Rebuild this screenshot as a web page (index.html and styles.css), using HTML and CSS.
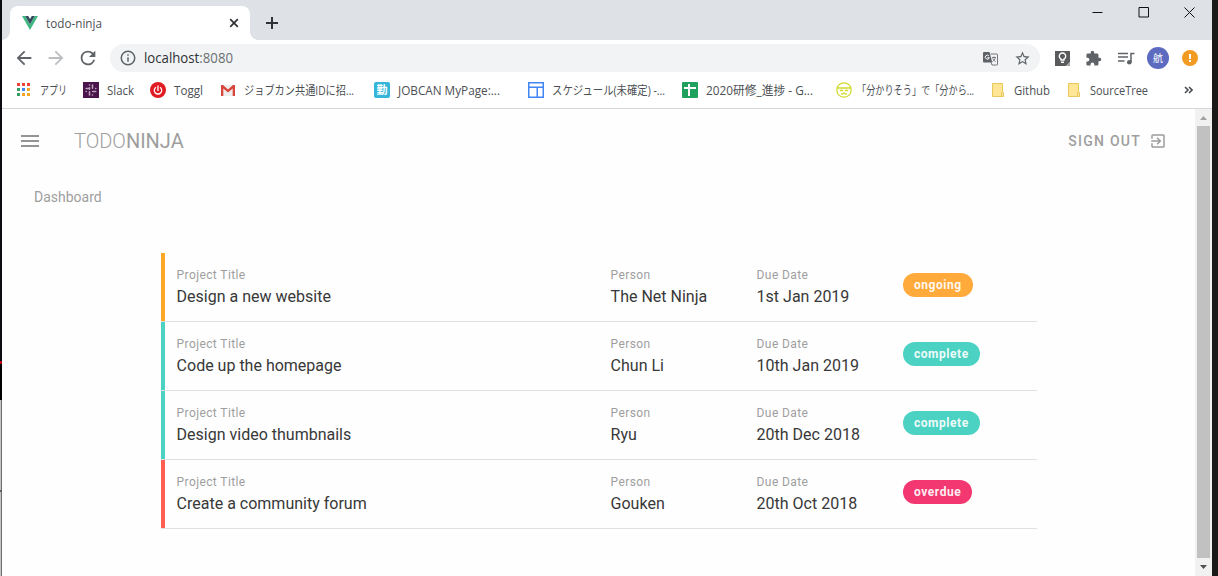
FILE: index.html
```html
<!DOCTYPE html>
<html lang="ja">
<head>
<meta charset="utf-8">
<title>todo-ninja</title>
<link rel="stylesheet" href="styles.css">
</head>
<body>
<div class="screen">
<div class="edge-left"><i class="edge-dark"></i><i class="edge-red"></i><i class="edge-dark2"></i><i class="edge-grey"></i><i class="edge-mark"></i><i class="edge-grey rest"></i></div>
<div class="window">
  <div class="titlebar">
    <div class="tab">
      <svg class="vue" width="16" height="14" viewBox="0 0 16 14"><path fill="#41b883" d="M0 0h3.2L8 8.3 12.8 0H16L8 14z"/><path fill="#35495e" d="M3.2 0h3L8 3l1.800-3h3L8 8.300z"/></svg>
      <span class="tab-title"><svg width="58" height="18"><text x="0" y="14" textLength="56" lengthAdjust="spacingAndGlyphs">todo-ninja</text></svg></span>
      <svg class="tab-close" width="10" height="10" viewBox="0 0 10 10"><path d="M1.200 1.200l7.600 7.600M8.800 1.200L1.200 8.800"/></svg>
    </div>
    <svg class="newtab" width="12" height="12" viewBox="0 0 12 12"><path d="M6 0v12M0 6h12"/></svg>
    <div class="winctl">
      <svg width="11" height="11" viewBox="0 0 11 11"><path d="M.5 5.500h10"/></svg>
      <svg width="11" height="11" viewBox="0 0 11 11"><path d="M1 .5h9.500v9.500H1z"/></svg>
      <svg width="11" height="11" viewBox="0 0 11 11"><path d="M.5.5l10 10M10.500.5l-10 10"/></svg>
    </div>
  </div>
  <div class="toolbar">
    <div class="nav">
      <svg width="22" height="22" viewBox="0 0 24 24" fill="#5f6368"><path d="M20 11H7.830l5.590-5.590L12 4l-8 8 8 8 1.410-1.410L7.830 13H20z"/></svg>
      <svg width="22" height="22" viewBox="0 0 24 24" fill="#bbbdbf"><path d="M12 4l-1.410 1.410L16.170 11H4v2h12.170l-5.580 5.590L12 20l8-8z"/></svg>
      <svg width="22" height="22" viewBox="0 0 24 24" fill="#5f6368"><path d="M17.650 6.350A7.960 7.960 0 0 0 12 4a8 8 0 1 0 7.730 10h-2.080A6 6 0 1 1 12 6c1.660 0 3.140.69 4.220 1.780L13 11h7V4z"/></svg>
    </div>
    <div class="omnibox">
      <svg width="18" height="18" viewBox="0 0 24 24" fill="#5f6368"><path d="M11 17h2v-6h-2zm0-8h2V7h-2zm1-7a10 10 0 1 0 0 20 10 10 0 0 0 0-20zm0 18a8 8 0 1 1 0-16 8 8 0 0 1 0 16z"/></svg>
      <svg class="url" width="92" height="20"><text x="0" y="15" textLength="89" lengthAdjust="spacingAndGlyphs"><tspan fill="#303134">localhost</tspan><tspan fill="#6c7075">:8080</tspan></text></svg>
      <svg class="translate" width="15" height="15" viewBox="0 0 15 15"><path fill="#5f6368" d="M1 1h5.500l2.800 10.500H1a1 1 0 0 1-1-1V2a1 1 0 0 1 1-1z"/><path fill="none" stroke="#74777b" d="M7.500 3H14a.5.5 0 0 1 .5.5v10a.5.5 0 0 1-.5.500H9l-1-2.500M9 6.500h4M11 5.500v1M12.300 6.500c-.5 2-1.600 3-2.800 4M9.800 7.500c.7 1.500 1.700 2.500 2.800 3"/><path fill="none" stroke="#fff" d="M5.900 4.900a2 2 0 1 0 .4 1.800H4.400"/></svg>
      <svg class="star" width="17" height="17" viewBox="0 0 24 24" fill="#5f6368"><path d="M22 9.240l-7.190-.62L12 2 9.190 8.630 2 9.240l5.460 4.730L5.820 21 12 17.270 18.180 21l-1.630-7.030zM12 15.400l-3.760 2.270 1-4.280-3.320-2.880 4.380-.38L12 6.100l1.710 4.040 4.380.38-3.320 2.880 1 4.280z"/></svg>
    </div>
    <div class="exts">
      <svg width="15" height="15" viewBox="0 0 15 15"><path fill="#5a5b5d" d="M0 0h15v11l-4 4H0z"/><path fill="#a4a5a6" d="M15 11v4h-4z"/><path fill="none" stroke="#fff" stroke-width="1.400" d="M6 9V8a3.200 3.200 0 1 1 3 0v1zM6 11.300h3"/></svg>
      <svg class="puzzle" width="17" height="17" viewBox="0 0 24 24" fill="#5f6368"><path d="M20.500 11H19V7a2 2 0 0 0-2-2h-4V3.500a2.500 2.500 0 0 0-5 0V5H4a2 2 0 0 0-2 2v3.800h1.500a2.700 2.700 0 0 1 0 5.400H2V20c0 1.100.9 2 2 2h3.800v-1.500a2.700 2.700 0 0 1 5.400 0V22H17a2 2 0 0 0 2-2v-4h1.500a2.500 2.500 0 0 0 0-5z"/></svg>
      <svg class="queue" width="17" height="13" viewBox="0 0 17 13"><path fill="none" stroke="#5f6368" stroke-width="1.500" d="M0 1.500h10M0 5h10M0 9h6.500M13 10.500V1.500h3.500"/><circle cx="11.300" cy="10.300" r="2.300" fill="#5f6368"/></svg>
      <span class="avatar">航</span>
      <svg class="warn" width="16" height="16" viewBox="0 0 16 16"><circle cx="8" cy="8" r="8" fill="#f29b22"/><path fill="#fff" d="M7 4h2v5H7zM7 10h2v2H7z"/></svg>
    </div>
  </div>
  <div class="bookmarks">
    <div class="bm"><svg width="16" height="16" viewBox="0 0 16 16"><path fill="#ea4335" d="M0 1h3v3H0zM5 1h3v3H5zM10 1h3v3h-3z"/><path fill="#34a060" d="M0 6h3v3H0zM0 11h3v3H0z"/><path fill="#4285f4" d="M5 6h3v3H5z"/><path fill="#f5a623" d="M10 6h3v3h-3zM5 11h3v3H5zM10 11h3v3h-3z"/></svg><svg class="lbl" width="34" height="20"><text x="0" y="15" textLength="27" lengthAdjust="spacingAndGlyphs">アプリ</text></svg></div>
    <div class="bm"><svg width="16" height="16" viewBox="0 0 16 16"><path fill="#4a154b" d="M0 0h16v16H0z"/><path fill="none" stroke="#b9a2ba" stroke-width="1.600" stroke-linecap="round" d="M6.500 5.800v1.500M6.500 3h.1M3.200 6.500h3M9.500 3v3.300M12.700 6.500h.1M9.700 9.500h3M9.500 13h-.1M6.500 9.700V13M3.200 9.500h.1"/></svg><svg class="lbl" width="32" height="20"><text x="0" y="15" textLength="27" lengthAdjust="spacingAndGlyphs">Slack</text></svg></div>
    <div class="bm"><svg width="16" height="16" viewBox="0 0 16 16"><circle cx="8" cy="8" r="8" fill="#e01b22"/><path fill="none" stroke="#fff" stroke-width="1.300" d="M8 3.500V9M6 5.200a3.700 3.700 0 1 0 4 0"/></svg><svg class="lbl" width="34" height="20"><text x="0" y="15" textLength="29" lengthAdjust="spacingAndGlyphs">Toggl</text></svg></div>
    <div class="bm"><svg width="16" height="16" viewBox="0 0 16 16"><path fill="#eee" d="M1 3h14v11H1z"/><path fill="#d9453a" d="M1 3h2l5 4.500L13 3h2v11h-2.300V6.500L8 10.500l-4.700-4V14H1z"/></svg><svg class="lbl" width="120" height="20"><text x="0" y="15" textLength="110" lengthAdjust="spacingAndGlyphs">ジョブカン共通IDに招...</text></svg></div>
    <div class="bm"><span class="kin">勤</span><svg class="lbl" width="110" height="20"><text x="0" y="15" textLength="102" lengthAdjust="spacingAndGlyphs">JOBCAN MyPage:...</text></svg></div>
    <div class="bm"><svg width="16" height="16" viewBox="0 0 16 16"><path fill="none" stroke="#4285f4" stroke-width="1.500" d="M.75.75h14.500v14.500H.75zM1 5.250h14M9.250 5v10"/></svg><svg class="lbl" width="122" height="20"><text x="0" y="15" textLength="113" lengthAdjust="spacingAndGlyphs">スケジュール(未確定) -...</text></svg></div>
    <div class="bm"><svg width="16" height="16" viewBox="0 0 16 16"><rect width="16" height="16" rx="1" fill="#1fa15d"/><path stroke="#fff" stroke-width="2" d="M2 6h12M7 2v12"/></svg><svg class="lbl" width="118" height="20"><text x="0" y="15" textLength="107" lengthAdjust="spacingAndGlyphs">2020研修_進捗 - G...</text></svg></div>
    <div class="bm"><svg width="16" height="16" viewBox="0 0 16 16" fill="none" stroke="#d3d92e" stroke-width="1.300"><circle cx="8" cy="8" r="7.200"/><path d="M1.500 6h13M4 9q1.500-1.500 3 0M9 9q1.500-1.500 3 0M5 11.500q1.500 1.300 3-.5 1.500 1.800 3 .5"/></svg><svg class="lbl" width="124" height="20"><text x="-3" y="15" textLength="117" lengthAdjust="spacingAndGlyphs">「分かりそう」で「分から...</text></svg></div>
    <div class="bm folder"><svg width="12" height="14" viewBox="0 0 12 14"><path fill="#ffe596" stroke="#e8c75b" d="M.5.5h10v9h1v4H.5zM9.500 9.500v4"/></svg><svg class="lbl" width="42" height="20"><text x="0" y="15" textLength="36" lengthAdjust="spacingAndGlyphs">Github</text></svg></div>
    <div class="bm folder"><svg width="12" height="14" viewBox="0 0 12 14"><path fill="#ffe596" stroke="#e8c75b" d="M.5.5h10v9h1v4H.5zM9.500 9.500v4"/></svg><svg class="lbl" width="64" height="20"><text x="0" y="15" textLength="58" lengthAdjust="spacingAndGlyphs">SourceTree</text></svg></div>
    <svg class="more" width="9" height="8" viewBox="0 0 9 8"><path d="M1 1l3 3-3 3M5 1l3 3-3 3"/></svg>
  </div>
  <div class="viewport">
    <main class="app">
      <header class="appbar">
        <svg class="menu" width="18" height="12" viewBox="0 0 18 12"><path fill="#949494" d="M0 0h18v2H0zM0 5h18v2H0zM0 10h18v2H0z"/></svg>
        <h1 class="brand"><span class="light">TODO</span><span>NINJA</span></h1>
        <div class="signout"><span>SIGN OUT</span><svg width="18" height="18" viewBox="0 0 24 24" fill="#9c9c9c"><path d="M10.090 15.590L11.500 17l5-5-5-5-1.410 1.410L12.670 11H3v2h9.670zM19 3H5a2 2 0 0 0-2 2v4h2V5h14v14H5v-4H3v4c0 1.100.89 2 2 2h14a2 2 0 0 0 2-2V5a2 2 0 0 0-2-2z"/></svg></div>
      </header>
      <h2 class="page-title">Dashboard</h2>
      <section class="projects">
        <div class="row ongoing"><div><div class="cap">Project Title</div><div class="val">Design a new website</div></div><div><div class="cap">Person</div><div class="val">The Net Ninja</div></div><div><div class="cap">Due Date</div><div class="val">1st Jan 2019</div></div><div><span class="chip">ongoing</span></div></div>
        <div class="row complete"><div><div class="cap">Project Title</div><div class="val">Code up the homepage</div></div><div><div class="cap">Person</div><div class="val">Chun Li</div></div><div><div class="cap">Due Date</div><div class="val">10th Jan 2019</div></div><div><span class="chip">complete</span></div></div>
        <div class="row complete"><div><div class="cap">Project Title</div><div class="val">Design video thumbnails</div></div><div><div class="cap">Person</div><div class="val">Ryu</div></div><div><div class="cap">Due Date</div><div class="val">20th Dec 2018</div></div><div><span class="chip">complete</span></div></div>
        <div class="row overdue"><div><div class="cap">Project Title</div><div class="val">Create a community forum</div></div><div><div class="cap">Person</div><div class="val">Gouken</div></div><div><div class="cap">Due Date</div><div class="val">20th Oct 2018</div></div><div><span class="chip">overdue</span></div></div>
      </section>
    </main>
    <div class="scrollbar">
      <svg width="17" height="17" viewBox="0 0 17 17"><path fill="#a0a0a0" d="M5 11h7L8.500 7z"/></svg>
      <div class="thumb"></div>
      <svg width="17" height="18" viewBox="0 0 17 18"><path fill="#505050" d="M5 7h7l-3.500 4z"/></svg>
    </div>
  </div>
</div>
<div class="edge-right"></div>
</div>
</body>
</html>
```
FILE: styles.css
```css
* { box-sizing: border-box; }
body { margin: 0; overflow: hidden; }
svg { display: block; flex: none; }
.screen { display: flex; width: 1218px; height: 576px; font-family: Roboto, sans-serif; }

.edge-left { width: 2px; display: flex; flex-direction: column; }
.edge-dark { height: 361px; background: #0c0d10; }
.edge-red { height: 3px; background: #b8001c; }
.edge-dark2 { height: 36px; background: #000; }
.edge-grey { height: 90px; background: linear-gradient(90deg, #c4c4c4 50%, #6e6e6e 50%); }
.edge-mark { height: 2px; background: #606060; }
.edge-grey.rest { height: auto; flex: 1; }
.edge-right { width: 6px; background: #191a18; }

.window { width: 1210px; display: flex; flex-direction: column; background: #fff; }
.titlebar { height: 40px; background: #dee1e6; display: flex; padding-left: 8px; }
.tab { width: 240px; height: 34px; margin-top: 6px; background: #fff; border-radius: 8px 8px 0 0; display: flex; align-items: center; padding: 0 11px 0 12px; position: relative; }
.tab::before, .tab::after { content: ""; position: absolute; bottom: 0; width: 8px; height: 8px; }
.tab::before { left: -8px; background: radial-gradient(circle at 0 0, transparent 7.5px, #fff 8px); }
.tab::after { right: -8px; background: radial-gradient(circle at 100% 0, transparent 7.5px, #fff 8px); }
.tab-title { margin-left: 8px; flex: 1; }
.tab-title text, .lbl text { font: 12px "Open Sans", "Noto Sans CJK JP", sans-serif; fill: #4c4f53; }
.lbl { overflow: visible; }
.tab-close, .newtab { fill: none; stroke: #303235; stroke-width: 1.700; }
.newtab { margin: 17px 0 0 16px; stroke-width: 2; }
.winctl { display: flex; gap: 35px; margin: 7px 17px 0 auto; fill: none; stroke: #111; }

.toolbar { height: 36px; display: flex; align-items: center; padding-left: 11px; }
.nav { display: flex; gap: 10px; width: 97px; }
.omnibox { width: 930px; height: 28px; border-radius: 14px; background: #f1f3f4; display: flex; align-items: center; padding-left: 9px; }
.url { margin-left: 7px; font: 14px "Open Sans", sans-serif; }
.translate { margin-left: auto; }
.star { margin: 0 9px 0 16px; }
.exts { display: flex; align-items: center; margin-left: 15px; }
.puzzle { margin-left: 15px; }
.queue { margin-left: 16px; }
.avatar { width: 22px; height: 22px; margin-left: 12px; border-radius: 50%; background: #5c6bc0; color: #fff; font: 10px/21px "Noto Sans CJK JP", sans-serif; text-align: center; }
.warn { margin-left: 13px; }

.bookmarks { height: 33px; border-bottom: 1px solid #d5d7da; padding: 0 0 4px 15px; display: grid; grid-template-columns: 66px 67px 70px 154px 154px 154px 154px 155px 76px 117px auto; align-items: center; }
.bm { display: flex; align-items: center; gap: 8px; min-width: 0; }
.bm:first-child { gap: 7px; }
.bm.folder { gap: 10px; padding-left: 1px; }
.kin { width: 16px; height: 16px; border-radius: 2px; background: #35b6d8; color: #fff; font: bold 11px/15px "Noto Sans CJK JP", sans-serif; text-align: center; }
.more { fill: none; stroke: #4a4d51; stroke-width: 1.600; }

.viewport { flex: 1; display: flex; min-height: 0; }
.app { flex: 1; background: #fefefe; }
.appbar { height: 64px; display: flex; align-items: center; padding: 0 28px 0 19px; }
.brand { margin: 0 0 0 35px; font-size: 20px; font-weight: 400; color: #9e9e9e; line-height: 30px; }
.light { font-weight: 300; }
.signout { margin-left: auto; display: flex; align-items: center; gap: 8px; font-size: 14px; font-weight: 500; letter-spacing: 1.250px; color: #9e9e9e; }
.page-title { margin: 14px 0 0 32px; font-size: 14px; line-height: 20px; font-weight: 400; color: #9e9e9e; }
.projects { margin: 46px 0 0 159px; width: 876px; }
.row { height: 69px; display: grid; grid-template-columns: 434px 146px 146.4px auto; padding: 12px 0 0 15.6px; border-bottom: 1px solid #e0e0e0; position: relative; }
.row::before { content: ""; position: absolute; left: 0; top: 0; width: 4px; height: 68px; background: #ffa726; }
.cap { font-size: 12px; line-height: 20px; letter-spacing: 0.400px; color: #9e9e9e; }
.val { font-size: 16px; line-height: 24px; color: #383838; white-space: nowrap; }
.chip { display: inline-block; height: 24px; margin-top: 8px; padding: 0 11px; border-radius: 12px; font-size: 12px; font-weight: 700; letter-spacing: 0.550px; line-height: 24px; color: rgba(255, 255, 255, 0.93); background: #ffaa3a; }
.row.complete::before, .complete .chip { background: #4bd2c2; }
.row.overdue::before { background: #ff5f52; }
.overdue .chip { background: #f33871; }

.scrollbar { width: 17px; background: #f1f1f1; display: flex; flex-direction: column; }
.thumb { flex: 1; width: 13px; margin: 0 2px; background: #c1c1c1; }
```
